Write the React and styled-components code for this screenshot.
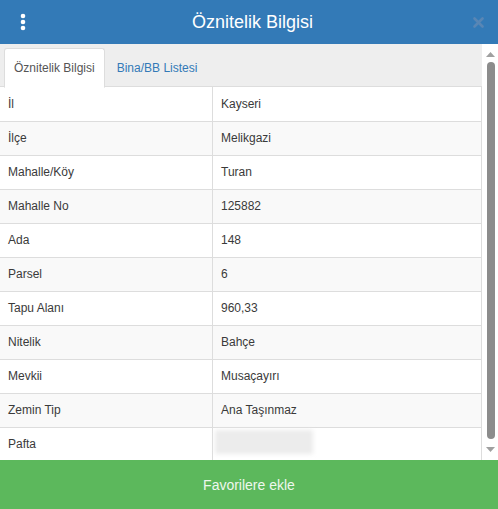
import React from "react";
import styled, { createGlobalStyle } from "styled-components";

const GlobalStyle = createGlobalStyle`
	html, body { margin: 0; padding: 0; }
	body {
		font-family: "Liberation Sans", Arial, sans-serif;
		color: #333;
		background: #fff;
	}
`;

const Panel = styled.div`
	width: 498px;
	height: 509px;
	display: flex;
	flex-direction: column;
	overflow: hidden;
`;

const Header = styled.header`
	height: 44px;
	flex: none;
	background: #337ab7;
	display: flex;
	align-items: center;
	justify-content: space-between;
	padding: 0 13px 0 16px;
	box-sizing: border-box;
	color: #fff;
`;

const Title = styled.h1`
	margin: 0;
	font-size: 18px;
	font-weight: normal;
	flex: 1;
	text-align: center;
	padding-left: 4px;
`;

const IconButton = styled.button`
	border: 0;
	background: none;
	padding: 0;
	width: 14px;
	height: 24px;
	display: flex;
	align-items: center;
	justify-content: center;
	color: ${(p) => p.$tone};
	cursor: pointer;
`;

const Body = styled.div`
	flex: 1;
	display: flex;
	min-height: 0;
	background: #fff;
`;

const Scroller = styled.div`
	flex: 1;
	overflow: hidden;
`;

const Rail = styled.div`
	width: 16px;
	flex: none;
	display: flex;
	flex-direction: column;
	align-items: center;
	padding: 8px 0 8px 1px;
	box-sizing: border-box;
	gap: 5px;
`;

const Thumb = styled.div`
	flex: 1;
	width: 8px;
	border-radius: 4px;
	background: #8c8c8c;
	margin-bottom: 3px;
`;

const TabBar = styled.ul`
	list-style: none;
	margin: 0;
	padding: 4px 4px 0;
	display: flex;
	gap: 2px;
	background: #eee;
	border-bottom: 1px solid #ddd;
	height: 43px;
	box-sizing: border-box;
`;

const Tab = styled.li`
	height: 40px;
	box-sizing: border-box;
	padding: 0 9px;
	display: flex;
	align-items: center;
	font-size: 12px;
	border: 1px solid ${(p) => (p.$active ? "#ddd" : "transparent")};
	border-bottom-color: ${(p) => (p.$active ? "#fff" : "transparent")};
	border-radius: 3px 3px 0 0;
	background: ${(p) => (p.$active ? "#fff" : "transparent")};
	color: ${(p) => (p.$active ? "#555" : "#337ab7")};
	margin-bottom: -1px;
`;

const Table = styled.table`
	width: 482px;
	border-collapse: collapse;
	font-size: 12px;
	border-right: 1px solid #ddd;
`;

const Row = styled.tr`
	height: 34px;
	background: ${(p) => (p.$odd ? "#f9f9f9" : "#fff")};
	border-top: ${(p) => (p.$first ? "0" : "1px solid #ddd")};
`;

const Cell = styled.td`
	padding: 0 8px;
	vertical-align: middle;
	width: ${(p) => (p.$key ? "196px" : "auto")};
	border-right: ${(p) => (p.$key ? "1px solid #ddd" : "0")};
	color: #3a3a3a;
	position: relative;
`;

const Hidden = styled.span`
	position: absolute;
	left: 2px;
	top: 2px;
	width: 98px;
	height: 24px;
	background: #ececec;
	filter: blur(2px);
`;

const Footer = styled.button`
	height: 49px;
	flex: none;
	border: 0;
	background: #5cb85c;
	color: #eef7ee;
	font-family: "Liberation Sans", Arial, sans-serif;
	font-size: 14px;
	width: 100%;
	cursor: pointer;
`;

const rows = [
	["İl", "Kayseri"],
	["İlçe", "Melikgazi"],
	["Mahalle/Köy", "Turan"],
	["Mahalle No", "125882"],
	["Ada", "148"],
	["Parsel", "6"],
	["Tapu Alanı", "960,33"],
	["Nitelik", "Bahçe"],
	["Mevkii", "Musaçayırı"],
	["Zemin Tip", "Ana Taşınmaz"],
	["Pafta", null],
];

const Dots = () => (
	<svg width="6" height="18" viewBox="0 0 6 18">
		<circle cx="3" cy="3" r="2.3" fill="currentColor" />
		<circle cx="3" cy="9" r="2.3" fill="currentColor" />
		<circle cx="3" cy="15" r="2.3" fill="currentColor" />
	</svg>
);

const Close = () => (
	<svg width="11" height="11" viewBox="0 0 11 11">
		<path d="M1.5 1.5 L9.5 9.5 M9.5 1.5 L1.5 9.5" stroke="currentColor" strokeWidth="2.6" strokeLinecap="round" />
	</svg>
);

const Arrow = ({ down }) => (
	<svg width="9" height="5" viewBox="0 0 9 5">
		<path d={down ? "M0 0 L9 0 L4.5 5 Z" : "M0 5 L9 5 L4.5 0 Z"} fill="#a0a0a0" />
	</svg>
);

const App = () => (
	<React.Fragment>
		<GlobalStyle />
		<Panel>
			<Header>
				<IconButton $tone="#fff" aria-label="menu"><Dots /></IconButton>
				<Title>Öznitelik Bilgisi</Title>
				<IconButton $tone="#5886b5" aria-label="kapat"><Close /></IconButton>
			</Header>
			<Body>
				<Scroller>
					<TabBar>
						<Tab $active>Öznitelik Bilgisi</Tab>
						<Tab>Bina/BB Listesi</Tab>
					</TabBar>
					<Table>
						<tbody>
							{rows.map(([key, value], i) => (
								<Row key={key} $odd={i % 2 === 1} $first={i === 0}>
									<Cell $key>{key}</Cell>
									<Cell>{value === null ? <Hidden /> : value}</Cell>
								</Row>
							))}
						</tbody>
					</Table>
				</Scroller>
				<Rail>
					<Arrow />
					<Thumb />
					<Arrow down />
				</Rail>
			</Body>
			<Footer>Favorilere ekle</Footer>
		</Panel>
	</React.Fragment>
);

export default App;
